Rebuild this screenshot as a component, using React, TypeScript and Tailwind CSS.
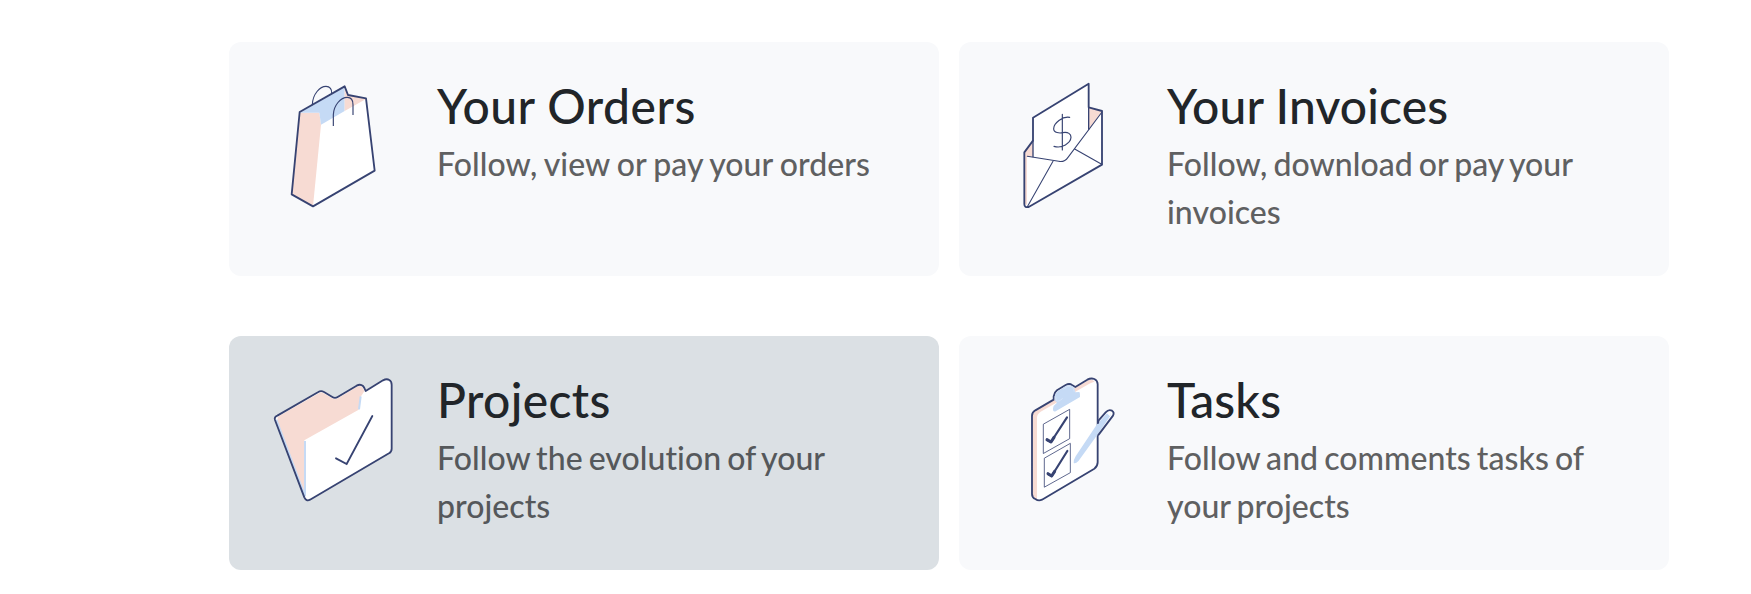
import type { ReactNode } from "react";

const NAVY = "#374372";
const PEACH = "#f7dbd3";
const SKY = "#c5daf5";

function BagIcon() {
  return (
    <svg className="size-[150px] shrink-0" viewBox="-30 0 450 450" fill="none" strokeLinejoin="round" strokeLinecap="round">
      <path d="M89 126L224 49L234 75L288 85L314 302L129 409L65 373Z" fill="#fff" />
      <path d="M89 128H148L153 164L129 409L65 373Z" fill={PEACH} />
      <path d="M89 128L224 50V123L153 164L148 128Z" fill={SKY} />
      <path d="M224 50L234 75L288 87L224 123Z" fill={PEACH} />
      <path d="M89 126L224 49L234 75L288 85L314 302L129 409L65 373Z" stroke={NAVY} strokeWidth="5.5" />
      <path d="M127 104C128 72 150 49 168 49C180 49 186 58 185 70" stroke={NAVY} strokeWidth="3.5" />
      <path d="M190 168V134C191 106 212 82 232 82C244 82 249 91 249 104V135" stroke={NAVY} strokeWidth="3.5" strokeLinecap="butt" />
    </svg>
  );
}

function InvoiceIcon() {
  return (
    <svg className="size-[150px] shrink-0" viewBox="-30 0 450 450" fill="none" strokeLinejoin="round" strokeLinecap="round">
      <path d="M73 247L99 212V143L266 41V112L306 123V284L86 411Q73 414 73 402Z" fill="#fff" />
      <path d="M266 112L306 125L266 179Z" fill={PEACH} />
      <path d="M99 212V260L81 259V404L73 402V247Z" fill={PEACH} />
      <path d="M73 247L99 212V143L266 41V112L306 123V284L86 411Q73 414 73 402Z" stroke={NAVY} strokeWidth="5.5" />
      <path d="M99 212V260M266 112V178" stroke={NAVY} strokeWidth="4" />
      <path d="M82 259L176 274Q194 277 204 262L306 126M159 274L82 410M224 237L305 283" stroke={NAVY} strokeWidth="3.2" />
      <path d="M187 133V240M209 142C187 138 161 160 161 176C161 189 179 190 188 188C205 185 213 192 213 202C212 219 186 237 162 229" stroke={NAVY} strokeWidth="3.5" />
    </svg>
  );
}

function FolderIcon() {
  return (
    <svg className="size-[150px] shrink-0" viewBox="0 -3 450 450" fill="none" strokeLinejoin="round" strokeLinecap="round">
      <path d="M52 152L175 81Q183 76 192 81L217 96Q225 101 233 96L290 62Q301 56 309 63Q313 67 317 78L369 46Q380 40 388 45Q395 49 395 60V251Q395 260 387 265L150 404Q139 410 133 397L45 165Q42 156 52 152Z" fill="#fff" />
      <path d="M53 160Q51 156 57 153L178 84Q184 80 191 85L215 99Q225 106 235 99L291 65Q306 57 313 79L302 95L296 134L133 226V390L52 168Z" fill={PEACH} />
      <path d="M49 164L134 390M135 228V394M302 94L297 133" stroke={SKY} strokeWidth="6" strokeLinecap="butt" />
      <path d="M52 152L175 81Q183 76 192 81L217 96Q225 101 233 96L290 62Q301 56 309 63Q313 67 317 78L369 46Q380 40 388 45Q395 49 395 60V251Q395 260 387 265L150 404Q139 410 133 397L45 165Q42 156 52 152Z" stroke={NAVY} strokeWidth="5.5" />
      <path d="M228 280L260 297L337 153" stroke={NAVY} strokeWidth="5.5" strokeLinejoin="miter" />
    </svg>
  );
}

function ClipboardIcon() {
  return (
    <svg className="size-[150px] shrink-0" viewBox="-30 -3 450 450" fill="none" strokeLinejoin="round" strokeLinecap="round">
      <path d="M106 136L262 44Q273 38 283 42Q293 47 293 58V292Q293 304 283 311L126 404Q116 409 106 402Q96 398 96 387V152Q96 142 106 136Z" fill="#fff" />
      <path d="M106 138L262 47Q276 40 284 50Q277 51 268 56L122 140Q111 147 111 158V404L100 396Q98 392 98 387V152Q98 143 106 138Z" fill={PEACH} />
      <path d="M106 136L161 104V94Q162 83 171 76L197 60Q208 54 216 60L226 66L262 44Q273 38 283 42Q293 47 293 58V292Q293 304 283 311L126 404Q116 409 106 402Q96 398 96 387V152Q96 142 106 136Z" stroke={NAVY} strokeWidth="5.5" />
      <path d="M164 106V95Q165 84 174 78L198 63Q208 58 216 63Q225 68 226 82L238 81Q240 82 240 96L167 139Q158 142 159 130Q160 121 171 113Z" fill={SKY} />
      <path d="M167 96L169 106Q175 113 187 101M191 72Q203 60 213 65Q222 69 223 79" stroke="#dce9fa" strokeWidth="2" />
      <path d="M293 178L296 166L317 142Q326 132 336 137Q344 142 339 152L293 212Z" fill="#fff" />
      <path d="M290 179L319 147Q326 140 332 145Q334 150 328 157L296 204L236 287Q225 298 221 293Q220 286 227 274Z" fill={SKY} />
      <path d="M321 145Q330 139 332 145Q334 149 329 153Z" fill="#fff" />
      <path d="M294 174L296 166L317 142Q326 132 336 137Q344 142 339 152L296 209" stroke={NAVY} strokeWidth="5.5" />
      <path d="M131 177L209 133V221L131 265ZM134 279L211 235V323L134 366Z" fill="#fff" stroke={NAVY} strokeWidth="2.4" />
      <path d="M141 225L153 231L201 157M144 327L155 333L202 258" stroke={NAVY} strokeWidth="6.5" />
      <path d="M141 224L153 231L162 217M144 326L155 333L164 319" stroke={NAVY} strokeWidth="9" />
    </svg>
  );
}

interface CardProps {
  title: string;
  text: string;
  icon: ReactNode;
  active?: boolean;
  titleSpacing?: string;
  textSpacing?: string;
}

function Card({
  title,
  text,
  icon,
  active,
  titleSpacing = "tracking-[0.15px]",
  textSpacing = "[word-spacing:-2.1px]",
}: CardProps) {
  return (
    <a
      href="#"
      className={`flex h-[234px] items-start gap-[27px] rounded-xl pt-7 pr-8 pl-[31px] ${active ? "bg-[#dbe0e4]" : "bg-[#f8f9fb]"}`}
    >
      {icon}
      <div className="min-w-0 flex-1 pt-[6px]">
        <h2 className={`mb-[5px] text-[48px] leading-[59px] font-medium text-[#212529] ${titleSpacing}`}>{title}</h2>
        <p
          className={`text-[32px] leading-[48px] font-medium tracking-[0.05px] ${textSpacing} ${active ? "text-[#55585b]" : "text-[#5f6061]"}`}
        >
          {text}
        </p>
      </div>
    </a>
  );
}

export default function App() {
  return (
    <main className="min-h-[594px] bg-white pt-[42px] pl-[229px] font-['Lato',sans-serif]">
      <div className="grid w-[1440px] grid-cols-2 gap-x-5 gap-y-[60px]">
        <Card
          title="Your Orders"
          text="Follow, view or pay your orders"
          icon={<BagIcon />}
          titleSpacing="tracking-[0.5px]"
          textSpacing="[word-spacing:-1px]"
        />
        <Card title="Your Invoices" text="Follow, download or pay your invoices" icon={<InvoiceIcon />} />
        <Card title="Projects" text="Follow the evolution of your projects" icon={<FolderIcon />} active titleSpacing="tracking-[0.35px]" />
        <Card title="Tasks" text="Follow and comments tasks of your projects" icon={<ClipboardIcon />} />
      </div>
    </main>
  );
}
